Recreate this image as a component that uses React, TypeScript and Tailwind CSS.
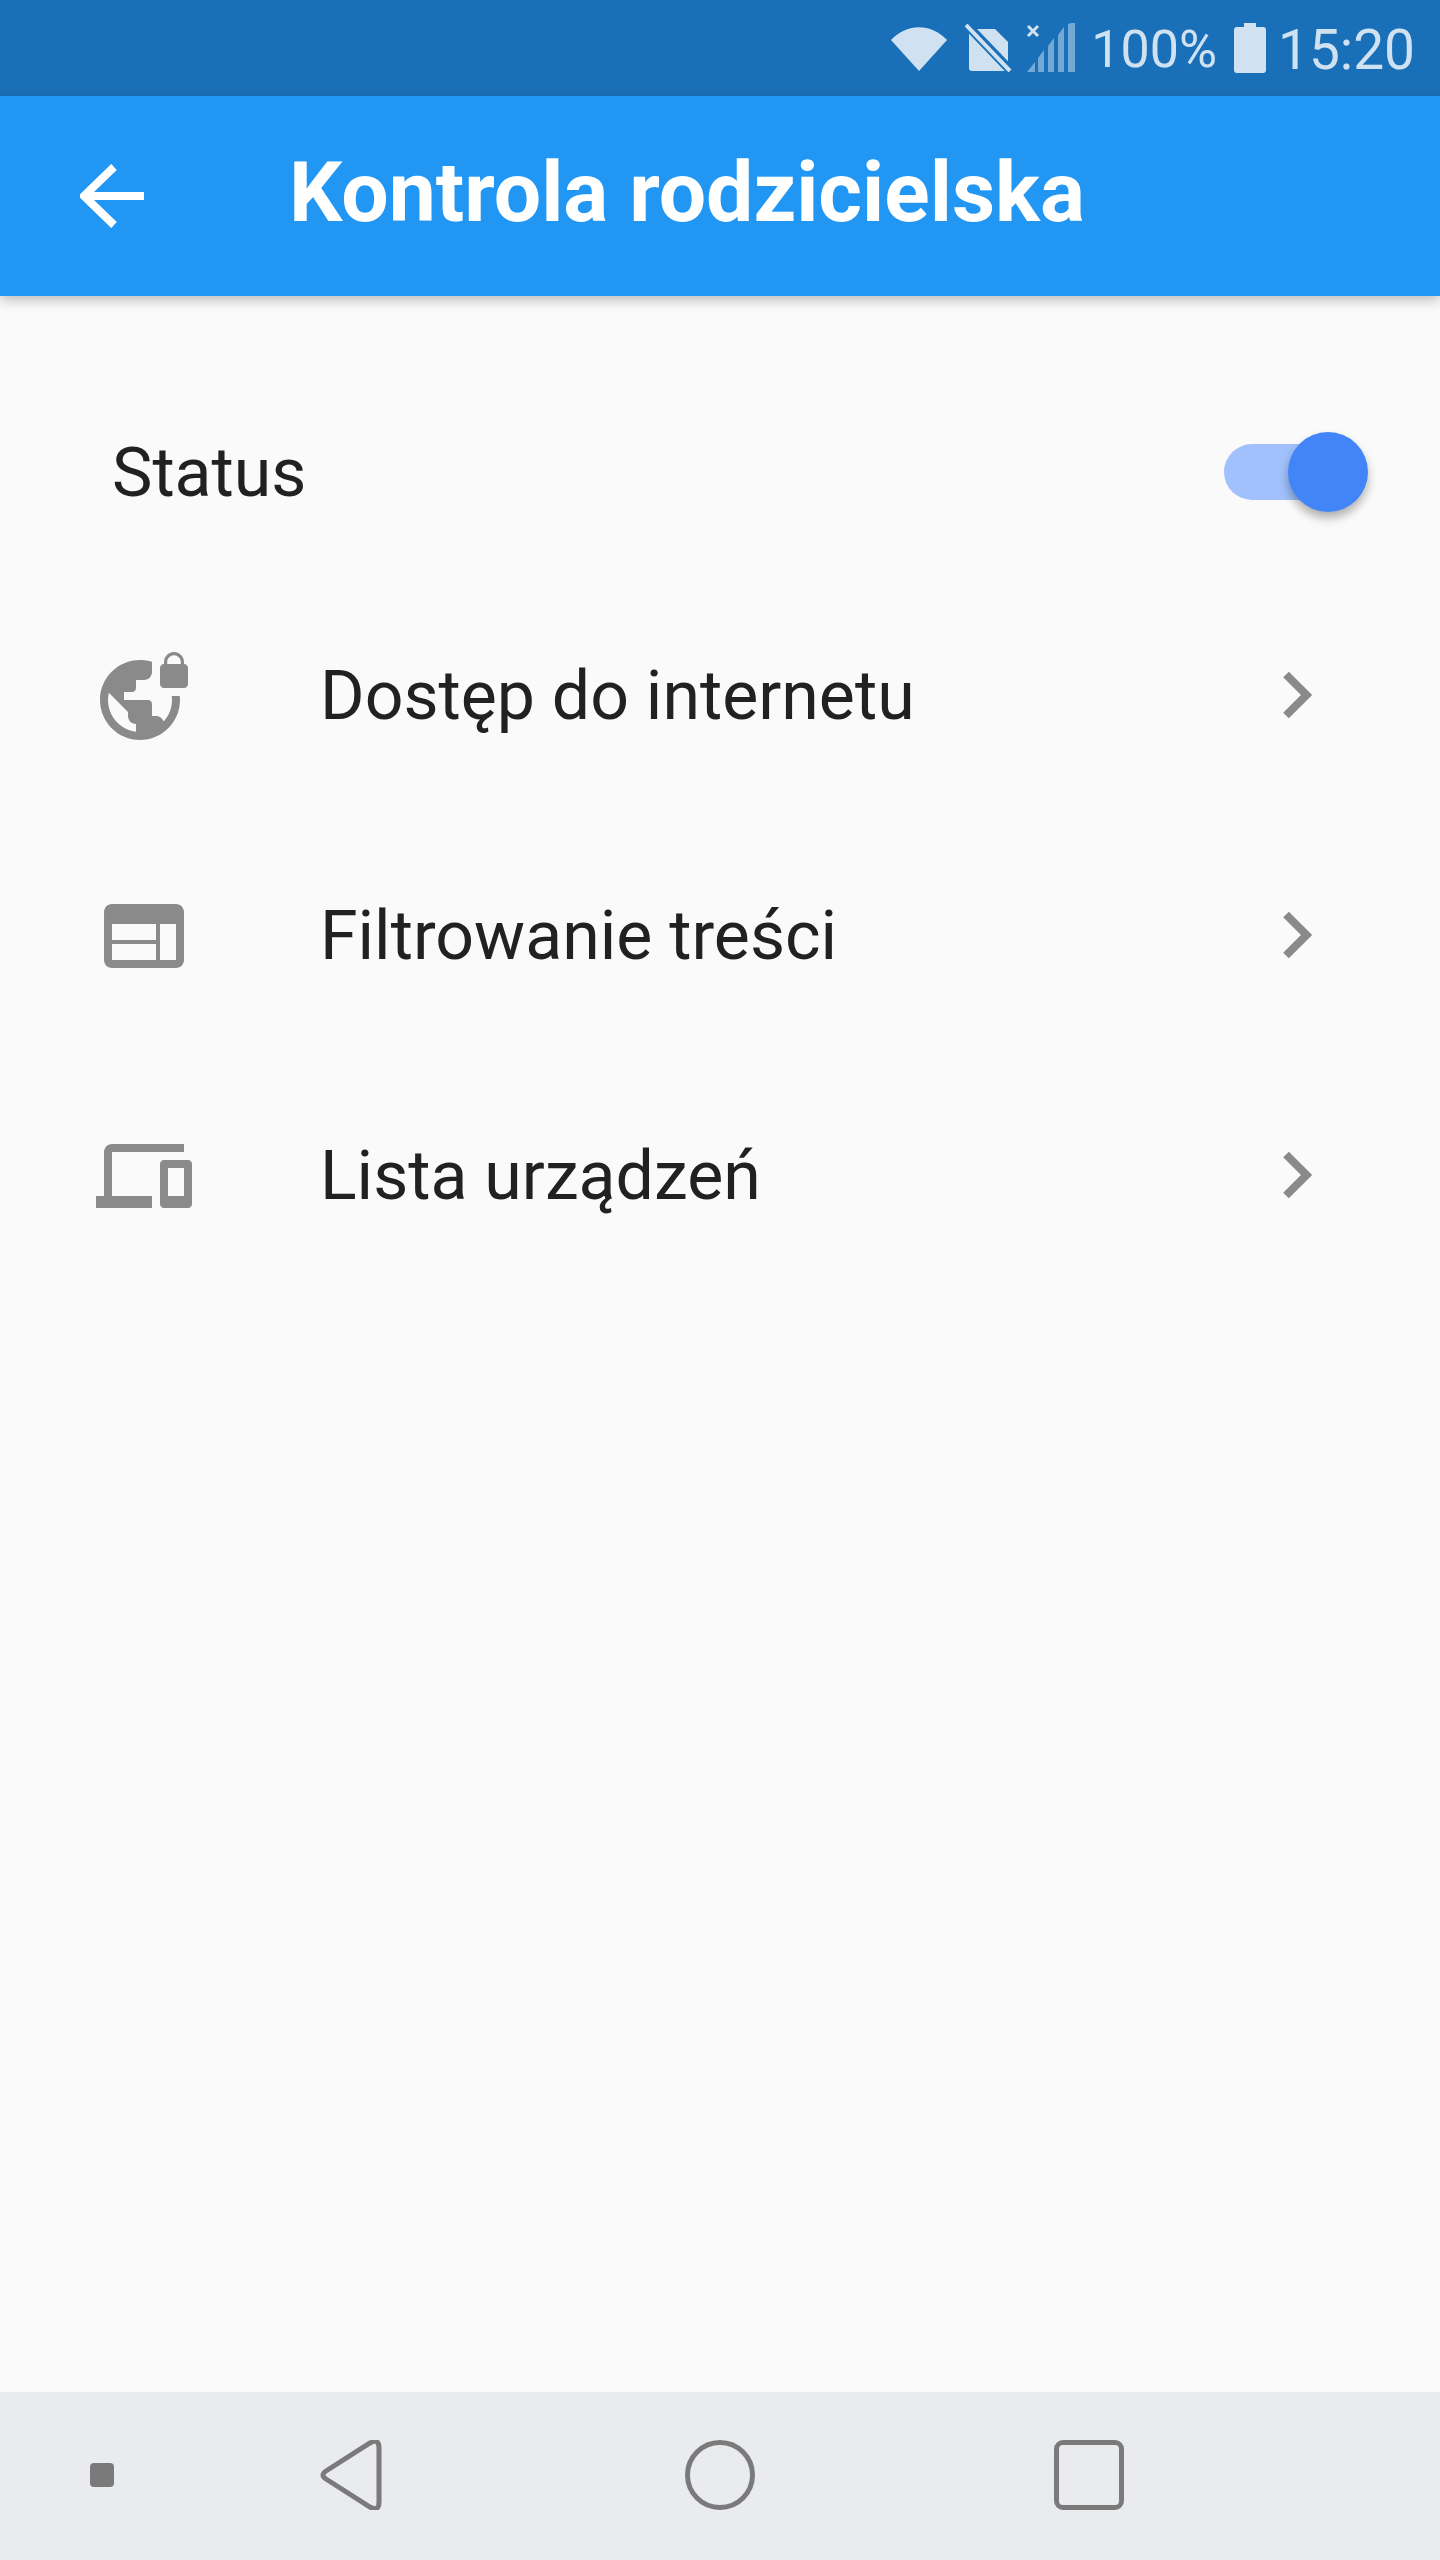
const ROWS = [
  {
    label: 'Dostęp do internetu',
    icon: 'M22 4v-.5C22 2.12 20.88 1 19.5 1S17 2.12 17 3.5V4c-.55 0-1 .45-1 1v4c0 .55.45 1 1 1h5c.55 0 1-.45 1-1V5c0-.55-.45-1-1-1zm-.8 0h-3.4v-.5c0-.94.76-1.7 1.7-1.7s1.7.76 1.7 1.7V4zm-2.28 8c.04.33.08.66.08 1 0 2.08-.8 3.97-2.1 5.39-.26-.81-1-1.39-1.9-1.39h-1v-3c0-.55-.45-1-1-1H7v-2h2c.55 0 1-.45 1-1V8h2c1.1 0 2-.9 2-2V3.46c-.95-.3-1.95-.46-3-.46C5.48 3 1 7.48 1 13s4.48 10 10 10 10-4.48 10-10c0-.34-.02-.67-.05-1h-2.03zM10 20.93c-3.95-.49-7-3.85-7-7.93 0-.62.08-1.21.21-1.79L8 16v1c0 1.1.9 2 2 2v1.93z',
  },
  {
    label: 'Filtrowanie treści',
    icon: 'M20 4H4c-1.1 0-1.99.9-1.99 2L2 18c0 1.1.9 2 2 2h16c1.1 0 2-.9 2-2V6c0-1.1-.9-2-2-2zm-5 14H4v-4h11v4zm0-5H4V9h11v4zm5 5h-4V9h4v9z',
  },
  {
    label: 'Lista urządzeń',
    icon: 'M4 6h18V4H4c-1.1 0-2 .9-2 2v11H0v3h14v-3H4V6zm19 2h-6c-.55 0-1 .45-1 1v10c0 .55.45 1 1 1h6c.55 0 1-.45 1-1V9c0-.55-.45-1-1-1zm-1 9h-4v-7h4v7z',
  },
];

function StatusIcons() {
  return (
    <div className="flex items-center text-[#d0e2f1]">
      <svg width="56" height="44" viewBox="0 0 56 44" className="mr-[18px] mt-[2px]">
        <path d="M0 13 C16 -4 40 -4 56 13 L28 44 Z" fill="currentColor" />
      </svg>
      <svg width="47" height="48" viewBox="0 0 47 48" className="mr-[14px]">
        <path d="M4 5 H30 L43 18 V44 Q43 47 40 47 H7 Q4 47 4 44 Z" fill="currentColor" />
        <path d="M2 1 L45 46" stroke="#1a70b8" strokeWidth="9" />
        <path d="M1 1 L45 47" stroke="currentColor" strokeWidth="4" />
      </svg>
      <svg width="50" height="50" viewBox="0 0 50 50" className="mr-[15px]">
        <path d="M1 49 L9 39 V49 Z M12 49 V35 L18 27 V49 Z M22 49 V23 L28 15 V49 Z M32 49 V12 L38 4 V49 Z M42 49 V1 L49 -1 V49 Z" fill="currentColor" opacity="0.5" />
        <path d="M2 3 L12 13 M12 3 L2 13" stroke="currentColor" strokeWidth="3" />
      </svg>
      <span className="mr-[17px] mt-1 text-[52px] leading-none">100%</span>
      <svg width="32" height="50" viewBox="0 0 32 50" className="mr-[12px]">
        <path d="M10 0 H22 V4 H29 Q32 4 32 7 V47 Q32 50 29 50 H3 Q0 50 0 47 V7 Q0 4 3 4 H10 Z" fill="currentColor" />
      </svg>
      <span className="mt-1 text-[55px] leading-none">15:20</span>
    </div>
  );
}

function NavBar() {
  return (
    <div className="flex h-[168px] items-center bg-[#e9ebef] pb-[2px] text-[#7a7a7a]">
      <div className="ml-[90px] h-6 w-6 rounded-[4px] bg-[#7a7a7a]" />
      <svg width="62" height="70" viewBox="0 0 62 70" className="ml-[206px]">
        <path d="M6 31 L50 3 Q59 -2 59 8 V62 Q59 72 50 67 L6 39 Q0 35 6 31 Z" fill="none" stroke="currentColor" strokeWidth="5" />
      </svg>
      <div className="ml-[303px] h-[70px] w-[70px] rounded-full border-[5px] border-[#7a7a7a]" />
      <div className="ml-[299px] h-[70px] w-[70px] rounded-[9px] border-[5px] border-[#7a7a7a]" />
    </div>
  );
}

export default function App() {
  return (
    <div className="flex h-[2560px] w-[1440px] flex-col bg-[#fafafa] font-['Roboto',sans-serif] text-[#212121]">
      <div className="flex h-24 items-center justify-end bg-[#1a70b8] pr-[25px]">
        <StatusIcons />
      </div>
      <header className="relative z-10 flex h-[200px] items-center bg-[#2196f3] shadow-[0_4px_12px_rgba(0,0,0,0.25)]">
        <svg width="64" height="64" viewBox="0 0 64 64" className="ml-[80px]" fill="none" stroke="#fff" strokeWidth="8">
          <path d="M64 32 H4 M34 3 L4 32 L34 61" />
        </svg>
        <h1 className="mb-[6px] ml-[145px] text-[84px] font-bold text-white">Kontrola rodzicielska</h1>
      </header>
      <main className="flex-1 pt-[72px]">
        <div className="flex h-[208px] items-center justify-between pl-[112px] pr-[72px]">
          <span className="pt-[2px] text-[68px]">Status</span>
          <div className="relative mr-[24px] h-14 w-[120px] rounded-full bg-[#a0c1fb]">
            <div className="absolute -right-[24px] -top-3 h-20 w-20 rounded-full bg-[#4285f9] shadow-[0_6px_10px_rgba(0,0,0,0.3)]" />
          </div>
        </div>
        {ROWS.map((row) => (
          <div key={row.label} className="flex h-[240px] items-center pl-[96px] pr-[110px]">
            <svg width="96" height="96" viewBox="0 0 24 24" fill="#8a8a8a">
              <path d={row.icon} />
            </svg>
            <span className="ml-[128px] flex-1 text-[68px]">{row.label}</span>
            <svg width="64" height="64" viewBox="0 0 64 64" fill="none" stroke="#8a8a8a" strokeWidth="8">
              <path d="M20 10.5 L40.5 31 L20 51.5" />
            </svg>
          </div>
        ))}
      </main>
      <NavBar />
    </div>
  );
}
